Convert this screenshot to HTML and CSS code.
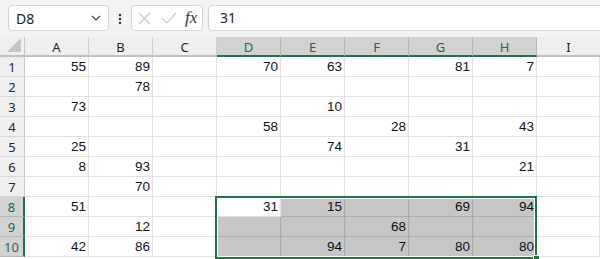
FILE: index.html
```html
<!DOCTYPE html>
<html lang="en">
<head>
  <meta charset="UTF-8">
  <title>Sheet</title>
  <link rel="stylesheet" href="styles.css">
</head>
<body>
  <div class="formula-bar">
    <div class="name-box">
      <span>D8</span>
      <svg width="10" height="6" viewBox="0 0 10 6"><path d="M1 1 L5 5 L9 1" fill="none" stroke="#444" stroke-width="1.2"/></svg>
    </div>
    <div class="more">
      <svg width="4" height="12" viewBox="0 0 4 12"><circle cx="2" cy="2" r="1.2" fill="#333"/><circle cx="2" cy="6" r="1.2" fill="#333"/><circle cx="2" cy="10" r="1.2" fill="#333"/></svg>
    </div>
    <div class="actions">
      <svg width="13" height="13" viewBox="0 0 13 13"><path d="M1 1 L12 12 M12 1 L1 12" stroke="#c4c4c4" stroke-width="1.1"/></svg>
      <svg width="16" height="12" viewBox="0 0 16 12"><path d="M1 6 L5.5 11 L15 1" fill="none" stroke="#c4c4c4" stroke-width="1.1"/></svg>
      <span class="fx">fx</span>
    </div>
    <div class="formula-input">31</div>
  </div>

  <div class="sheet">
    <div class="grid">
      <div class="hd corner"><span class="tri"></span></div>
      <div class="hd col">A</div>
      <div class="hd col">B</div>
      <div class="hd col">C</div>
      <div class="hd col sel">D</div>
      <div class="hd col sel">E</div>
      <div class="hd col sel">F</div>
      <div class="hd col sel">G</div>
      <div class="hd col sel">H</div>
      <div class="hd col last">I</div>

      <div class="hd row">1</div>
      <div class="c">55</div><div class="c">89</div><div class="c"></div><div class="c">70</div><div class="c">63</div><div class="c"></div><div class="c">81</div><div class="c">7</div><div class="c"></div>

      <div class="hd row">2</div>
      <div class="c"></div><div class="c">78</div><div class="c"></div><div class="c"></div><div class="c"></div><div class="c"></div><div class="c"></div><div class="c"></div><div class="c"></div>

      <div class="hd row">3</div>
      <div class="c">73</div><div class="c"></div><div class="c"></div><div class="c"></div><div class="c">10</div><div class="c"></div><div class="c"></div><div class="c"></div><div class="c"></div>

      <div class="hd row">4</div>
      <div class="c"></div><div class="c"></div><div class="c"></div><div class="c">58</div><div class="c"></div><div class="c">28</div><div class="c"></div><div class="c">43</div><div class="c"></div>

      <div class="hd row">5</div>
      <div class="c">25</div><div class="c"></div><div class="c"></div><div class="c"></div><div class="c">74</div><div class="c"></div><div class="c">31</div><div class="c"></div><div class="c"></div>

      <div class="hd row">6</div>
      <div class="c">8</div><div class="c">93</div><div class="c"></div><div class="c"></div><div class="c"></div><div class="c"></div><div class="c"></div><div class="c">21</div><div class="c"></div>

      <div class="hd row">7</div>
      <div class="c"></div><div class="c">70</div><div class="c"></div><div class="c"></div><div class="c"></div><div class="c"></div><div class="c"></div><div class="c"></div><div class="c"></div>

      <div class="hd row sel">8</div>
      <div class="c">51</div><div class="c"></div><div class="c"></div><div class="c active">31</div><div class="c in">15</div><div class="c in"></div><div class="c in">69</div><div class="c in">94</div><div class="c"></div>

      <div class="hd row sel">9</div>
      <div class="c"></div><div class="c">12</div><div class="c"></div><div class="c in"></div><div class="c in"></div><div class="c in">68</div><div class="c in"></div><div class="c in"></div><div class="c"></div>

      <div class="hd row sel">10</div>
      <div class="c">42</div><div class="c">86</div><div class="c"></div><div class="c in"></div><div class="c in">94</div><div class="c in">7</div><div class="c in">80</div><div class="c in">80</div><div class="c"></div>
    </div>
    <div class="selection"><span class="handle"></span></div>
  </div>
</body>
</html>
```

FILE: styles.css
```css
html, body {
  overflow: hidden;
}
body {
  margin: 0;
  width: 600px;
  height: 259px;
  background: #fff;
  font-family: "Liberation Sans", Arial, sans-serif;
}
.formula-bar {
  display: flex;
  align-items: center;
  height: 37px;
  padding: 5px 0 6px 8px;
  box-sizing: border-box;
  background: #f3f3f3;
}
.name-box {
  display: flex;
  align-items: center;
  justify-content: space-between;
  width: 101px;
  height: 26px;
  box-sizing: border-box;
  padding: 0 7px;
  background: #fff;
  border: 1px solid #d4d4d4;
  border-radius: 4px;
  font-family: "Noto Sans", sans-serif;
  font-size: 14px;
  color: #222;
}
.more {
  width: 22px;
  display: flex;
  justify-content: center;
  padding-top: 1px;
}
.actions {
  display: flex;
  align-items: center;
  gap: 10px;
  width: 72px;
  height: 26px;
  box-sizing: border-box;
  padding: 0 0 0 6px;
  background: #fff;
  border: 1px solid #d4d4d4;
  border-radius: 4px;
}
.fx {
  font-family: "Liberation Serif", serif;
  font-style: italic;
  font-size: 17px;
  color: #333;
  margin-left: -2px;
}
.formula-input {
  flex: 1;
  height: 26px;
  margin-left: 5px;
  margin-right: -6px;
  box-sizing: border-box;
  padding: 4px 11px;
  background: #fff;
  border: 1px solid #d4d4d4;
  border-radius: 4px;
  font-family: "Noto Sans", sans-serif;
  font-size: 14px;
  line-height: 16px;
  color: #222;
}
.sheet {
  position: relative;
  height: 222px;
}
.grid {
  display: grid;
  grid-template-columns: 25px repeat(8, 64px) 63px;
  grid-auto-rows: 20px;
}
.hd {
  background: #efefef;
  box-sizing: border-box;
  border-right: 1px solid #c8c8c8;
  border-bottom: 1px solid #c8c8c8;
  font-family: "Noto Sans", sans-serif;
  font-size: 13px;
  color: #262626;
  display: flex;
  align-items: center;
  justify-content: center;
}
.hd.col {
  border-bottom: 2px solid #c0c0c0;
  border-right-color: #d0d0d0;
  padding-top: 1px;
}
.hd.col.last {
  border-right: none;
  color: #3a0f3a;
}
.hd.col.sel {
  background: #d2d2d2;
  color: #1f6a3f;
  border-bottom: 2px solid #217346;
  border-right-color: #b6b6b6;
}
.hd.row {
  border-bottom-color: #d6d6d6;
}
.hd.row.sel {
  background: #d2d2d2;
  color: #1f6a3f;
  border-right: 2px solid #217346;
  border-bottom-color: #b6b6b6;
}
.corner {
  position: relative;
  border-bottom: 2px solid #c0c0c0;
}
.tri {
  position: absolute;
  right: 3px;
  bottom: 3px;
  width: 0;
  height: 0;
  border-left: 14px solid transparent;
  border-bottom: 14px solid #c4c4c4;
}
.c {
  box-sizing: border-box;
  border-right: 1px solid #e1e1e1;
  border-bottom: 1px solid #e1e1e1;
  display: flex;
  align-items: flex-end;
  justify-content: flex-end;
  padding: 0 2px 2px 0;
  font-size: 13.5px;
  line-height: 15px;
  color: #111;
}
.c.in {
  background: #c6c6c6;
  border-right-color: #ababab;
  border-bottom-color: #ababab;
}
.selection {
  position: absolute;
  left: 215px;
  top: 159px;
  width: 322px;
  height: 63px;
  box-sizing: border-box;
  border: 2px solid #217346;
  box-shadow: inset 0 0 0 1px #fff;
}
.handle {
  position: absolute;
  right: -5px;
  bottom: -5px;
  width: 5px;
  height: 5px;
  background: #217346;
  border: 1px solid #fff;
}
```
